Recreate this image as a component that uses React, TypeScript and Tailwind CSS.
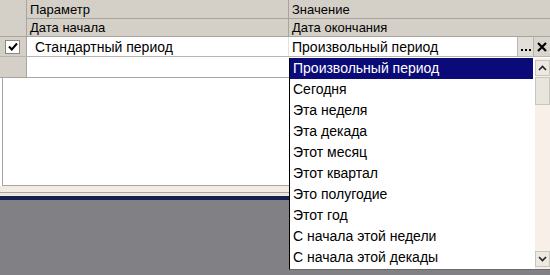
import React from 'react';

const items = [
  'Произвольный период',
  'Сегодня',
  'Эта неделя',
  'Эта декада',
  'Этот месяц',
  'Этот квартал',
  'Это полугодие',
  'Этот год',
  'С начала этой недели',
  'С начала этой декады',
];

function Chevron({ up }: { up?: boolean }) {
  return (
    <svg width="9" height="6" viewBox="0 0 9 6">
      <polyline
        points={up ? '1,5 4.5,1.5 8,5' : '1,1 4.5,4.5 8,1'}
        fill="none"
        stroke="#222"
        strokeWidth="1.6"
      />
    </svg>
  );
}

export default function App() {
  return (
    <div className="relative w-[550px] h-[275px] overflow-hidden bg-[#808085] font-['Liberation_Sans',Arial,sans-serif] text-black">
      {/* Grid */}
      <div className="flex flex-col h-[186px] bg-white">
        {/* Header */}
        <div className="flex h-[37px] border-b border-[#a8a59e]">
          <div className="w-[27px] shrink-0 bg-[#d4d0c8] border-r border-[#a8a59e]" />
          <div className="flex-1 flex flex-col bg-[#d4d0c8] text-[13px] leading-none">
            <div className="flex h-[19px] border-b border-[#a8a59e]">
              <div className="w-[262px] border-r border-[#a8a59e] pl-[3px] pt-[3px]">Параметр</div>
              <div className="flex-1 pl-[3px] pt-[3px]">Значение</div>
            </div>
            <div className="flex flex-1">
              <div className="w-[262px] border-r border-[#a8a59e] pl-[3px] pt-[2px]">Дата начала</div>
              <div className="flex-1 pl-[3px] pt-[2px]">Дата окончания</div>
            </div>
          </div>
        </div>

        {/* Row 1 */}
        <div className="flex h-[20px] border-b border-[#b8b5ae] text-[14px] leading-none">
          <div className="w-[27px] shrink-0 bg-[#d4d0c8] border-r border-[#a8a59e] flex items-center pl-[5px]">
            <div className="w-[15px] h-[14px] bg-white border border-[#8a877f] flex items-center justify-center">
              <svg width="10" height="9" viewBox="0 0 10 9">
                <polyline points="1,4.5 3.8,7.5 9,1.5" fill="none" stroke="#000" strokeWidth="2" />
              </svg>
            </div>
          </div>
          <div className="w-[262px] border-r border-[#e4e2dd] flex items-center pl-[8px]">Стандартный период</div>
          <div className="flex-1 flex items-center">
            <div className="flex-1 pl-[3px]">Произвольный период</div>
            <div className="w-[16px] h-full bg-[#e2dfd8] border-l border-[#b8b5ae] flex items-end justify-center gap-[2px] pb-[5px]">
              <span className="w-[2px] h-[2px] bg-black" />
              <span className="w-[2px] h-[2px] bg-black" />
              <span className="w-[2px] h-[2px] bg-black" />
            </div>
            <div className="w-[17px] h-full bg-[#d8d5ce] border-l border-[#b8b5ae] flex items-center justify-center">
              <svg width="10" height="10" viewBox="0 0 10 10">
                <path d="M1 1 L9 9 M9 1 L1 9" stroke="#000" strokeWidth="2.2" />
              </svg>
            </div>
          </div>
        </div>

        {/* Row 2 */}
        <div className="flex h-[21px] border-b border-[#a8a59e]">
          <div className="w-[27px] shrink-0 bg-[#d4d0c8] border-r border-[#a8a59e]" />
          <div className="flex-1" />
        </div>

        {/* Empty area */}
        <div className="flex-1 ml-[2px] border-l border-b border-[#a8a59e] bg-white" />
      </div>

      <div className="h-[7px] bg-[#f1ebe3] border-b border-[#a8a59e]" />
      <div className="h-[3px] bg-[#ece7df]" />
      <div className="h-[4px] bg-[#17204e]" />

      {/* Dropdown list */}
      <div className="absolute left-[289px] top-[58px] w-[261px] h-[212px] bg-white border-l border-black border-b border-b-[#6a6a6a] flex">
        <div className="flex-1 flex flex-col text-[14px] leading-none">
          {items.map((t, i) => (
            <div
              key={t}
              className={`h-[21px] shrink-0 flex items-center pl-[3px] pb-[1px] ${i === 0 ? 'bg-[#0a0a78] text-white mr-[2px]' : ''}`}
            >
              {t}
            </div>
          ))}
        </div>
        <div className="w-[15px] bg-[#f7efe8] flex flex-col pt-[2px] pb-[2px]">
          <div className="h-[16px] bg-[#ece9e2] border border-[#c9c5bc] flex items-center justify-center">
            <Chevron up />
          </div>
          <div className="h-[28px] mt-[1px] bg-[#e8e5de] border border-[#c9c5bc]" />
          <div className="flex-1" />
          <div className="h-[16px] bg-[#ece9e2] border border-[#c9c5bc] flex items-center justify-center">
            <Chevron />
          </div>
        </div>
      </div>
    </div>
  );
}
